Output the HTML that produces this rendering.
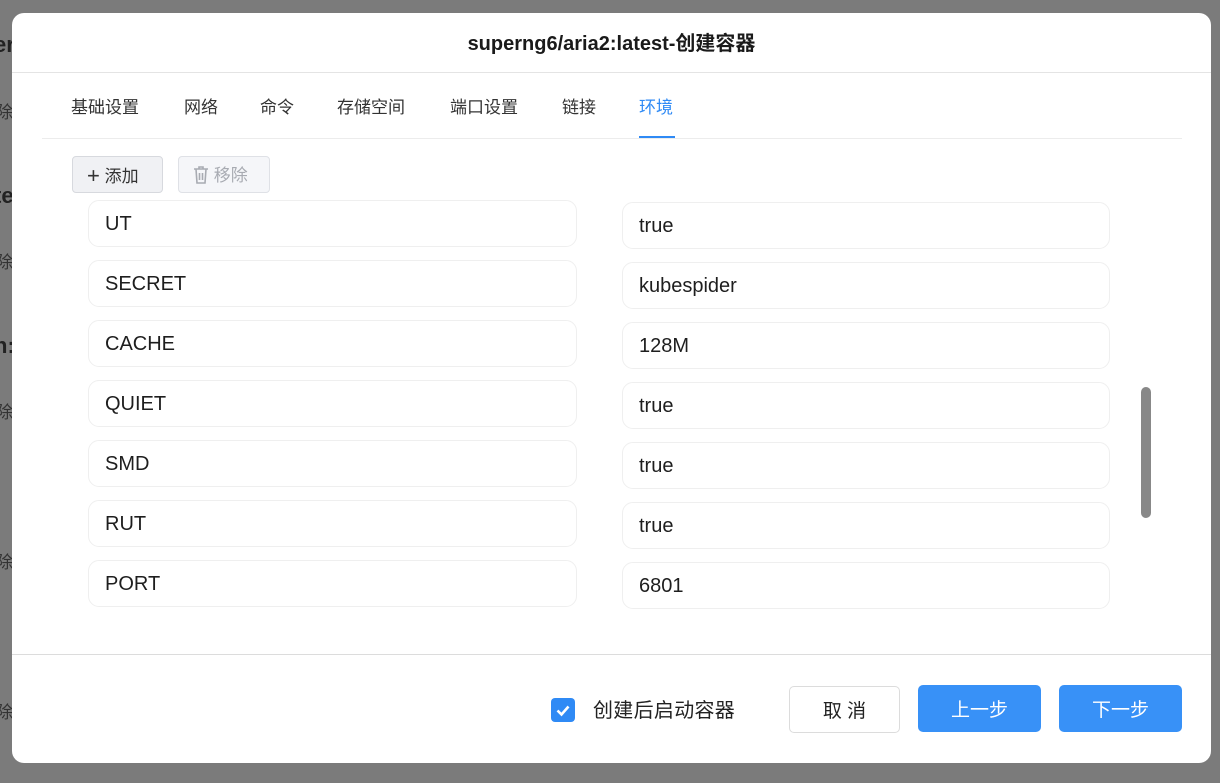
<!DOCTYPE html>
<html><head><meta charset="utf-8"><style>
*{box-sizing:border-box;margin:0;padding:0}
body{width:1220px;height:783px;overflow:hidden;background:#7b7b7b;font-family:"Liberation Sans","Noto Sans CJK SC",sans-serif;position:relative;color:#222}
.a{position:absolute}
.bg{color:#222;font-size:20px}
.modal{left:12px;top:13px;width:1199px;height:750px;background:#fff;border-radius:12px;overflow:hidden}
.title{left:0;top:0;width:1199px;height:59px;text-align:center;line-height:62px;font-size:20px;font-weight:bold;color:#1a1a1a}
.hl{background:#e4e4e4;height:1px}
.tab{top:83px;font-size:17px;color:#333;line-height:24px}
.inp{height:47px;border:1px solid #efefef;border-radius:11px;font-size:20px;line-height:47px;padding-left:16px;color:#1e1e1e}
.btn{height:47px;border-radius:5px;font-size:19px;line-height:51px;text-align:center}
</style></head><body>
<div class="a bg" style="left:-6px;top:32px;font-weight:bold;font-size:22px">er</div>
<div class="a bg" style="left:-4px;top:98px;color:#333;font-size:17px">除</div>
<div class="a bg" style="left:-6px;top:183px;font-weight:bold;font-size:22px">te</div>
<div class="a bg" style="left:-4px;top:248px;color:#333;font-size:17px">除</div>
<div class="a bg" style="left:-6px;top:333px;font-weight:bold;font-size:22px">n:</div>
<div class="a bg" style="left:-4px;top:398px;color:#333;font-size:17px">除</div>
<div class="a bg" style="left:-4px;top:548px;color:#333;font-size:17px">除</div>
<div class="a bg" style="left:-4px;top:698px;color:#333;font-size:17px">除</div>
<div class="a modal">
  <div class="a title">superng6/aria2:latest-创建容器</div>
  <div class="a hl" style="left:0;top:59px;width:1199px"></div>
  <div class="a tab" style="left:59px">基础设置</div>
  <div class="a tab" style="left:172px">网络</div>
  <div class="a tab" style="left:248px">命令</div>
  <div class="a tab" style="left:325px">存储空间</div>
  <div class="a tab" style="left:438px">端口设置</div>
  <div class="a tab" style="left:550px">链接</div>
  <div class="a tab" style="left:627px;color:#2f8af5">环境</div>
  <div class="a" style="left:627px;top:123px;width:36px;height:3px;background:#2f8af5"></div>
  <div class="a hl" style="left:30px;top:125px;width:1140px;background:#ececec"></div>
  <div class="a" style="left:60px;top:143px;width:91px;height:37px;background:#f0f1f4;border:1px solid #d7d9de;border-radius:4px;font-size:17px;line-height:37px;color:#333;padding-left:14px"><span style="font-size:22px;font-weight:300;vertical-align:-1px">+</span> 添加</div>
  <div class="a" style="left:166px;top:143px;width:92px;height:37px;background:#f5f6f9;border:1px solid #dfe1e6;border-radius:4px;font-size:17px;line-height:37px;color:#a8abb2;padding-left:14px">
    <svg width="16" height="18" viewBox="0 0 16 18" style="vertical-align:-3px" fill="none" stroke="#a8abb2" stroke-width="1.6"><path d="M1 3h14M6 3V1h4v2M3 3l1 14h8l1-14M6.5 7v7M9.5 7v7"/></svg> 移除</div>
  <div class="a inp" style="left:76px;top:187px;width:489px">UT</div>
  <div class="a inp" style="left:76px;top:247px;width:489px">SECRET</div>
  <div class="a inp" style="left:76px;top:307px;width:489px">CACHE</div>
  <div class="a inp" style="left:76px;top:367px;width:489px">QUIET</div>
  <div class="a inp" style="left:76px;top:427px;width:489px">SMD</div>
  <div class="a inp" style="left:76px;top:487px;width:489px">RUT</div>
  <div class="a inp" style="left:76px;top:547px;width:489px">PORT</div>
  <div class="a inp" style="left:610px;top:189px;width:488px">true</div>
  <div class="a inp" style="left:610px;top:249px;width:488px">kubespider</div>
  <div class="a inp" style="left:610px;top:309px;width:488px">128M</div>
  <div class="a inp" style="left:610px;top:369px;width:488px">true</div>
  <div class="a inp" style="left:610px;top:429px;width:488px">true</div>
  <div class="a inp" style="left:610px;top:489px;width:488px">true</div>
  <div class="a inp" style="left:610px;top:549px;width:488px">6801</div>
  <div class="a" style="left:1129px;top:374px;width:10px;height:131px;background:#888;border-radius:5px"></div>
  <div class="a hl" style="left:0;top:641px;width:1199px;background:#dcdcdc"></div>
  <div class="a" style="left:539px;top:685px;width:24px;height:24px;background:#2f8af5;border-radius:4px">
    <svg width="24" height="24" viewBox="0 0 24 24"><path d="M6.5 12.5l4 4 7-8" fill="none" stroke="#fff" stroke-width="2.6"/></svg></div>
  <div class="a" style="left:581px;top:685px;font-size:20px;line-height:26px;color:#222;letter-spacing:0.3px">创建后启动容器</div>
  <div class="a btn" style="left:777px;top:673px;width:111px;border:1px solid #dcdcdc;color:#222;line-height:49px">取 消</div>
  <div class="a btn" style="left:906px;top:672px;width:123px;background:#3891f7;color:#fff">上一步</div>
  <div class="a btn" style="left:1047px;top:672px;width:123px;background:#3891f7;color:#fff">下一步</div>
</div>
</body></html>
